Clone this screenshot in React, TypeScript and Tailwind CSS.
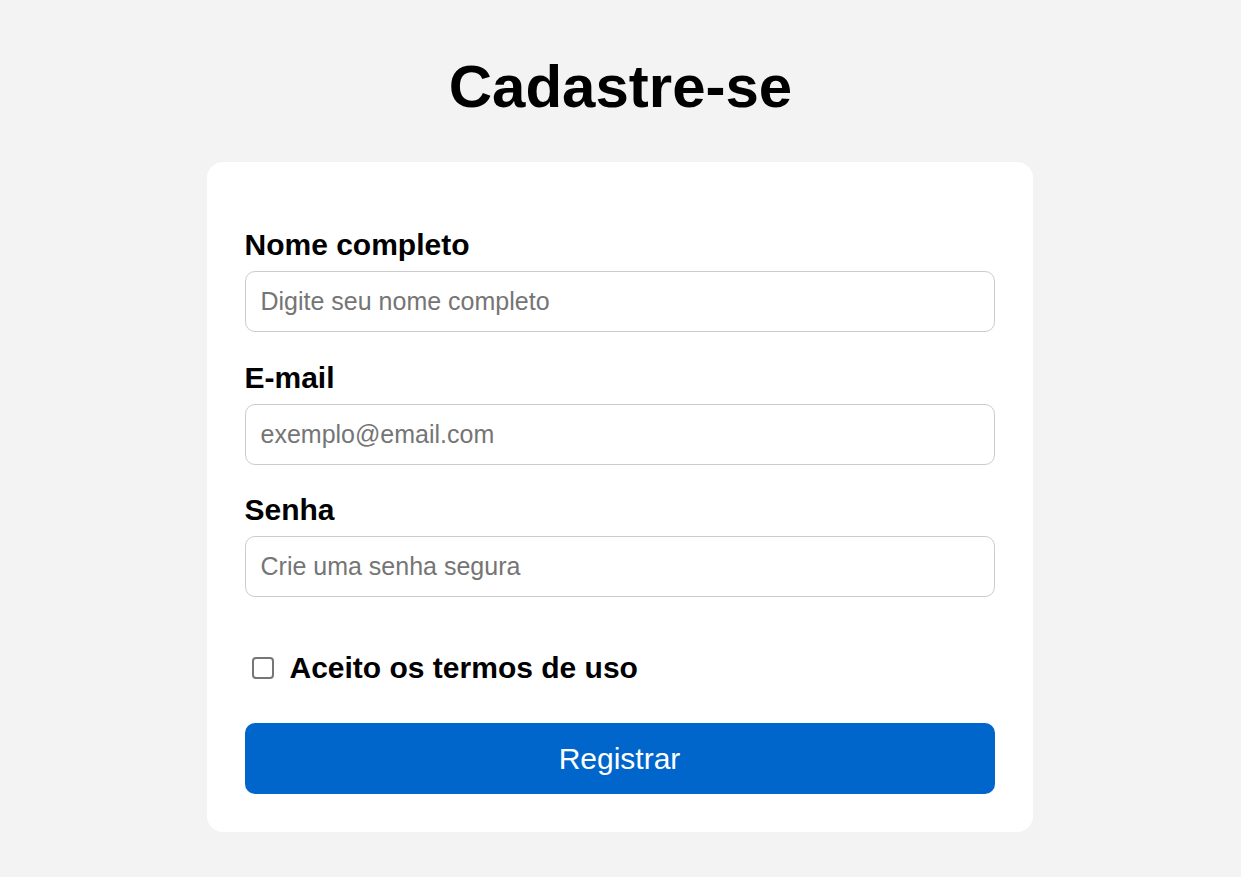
const fields = [
  { label: "Nome completo", type: "text", placeholder: "Digite seu nome completo" },
  { label: "E-mail", type: "email", placeholder: "exemplo@email.com" },
  { label: "Senha", type: "password", placeholder: "Crie uma senha segura" },
]

const App = () => {
  return (
    <div className="min-h-screen bg-[#f3f3f3] flex flex-col items-center pt-[52px] font-['Liberation_Sans',Arial,sans-serif] text-black">
      <h1 className="text-[60px] font-bold leading-[69px]">Cadastre-se</h1>

      <form className="mt-[41px] w-[826px] mr-[2px] bg-white rounded-[16px] px-[38px] pt-[66px] pb-[38px]">
        {fields.map((f, i) => (
          <div key={f.label} className={i > 0 ? "mt-[28.5px]" : ""}>
            <label className="block text-[30px] font-bold leading-[33px] mb-[10px]">
              {f.label}
            </label>
            <input
              type={f.type}
              placeholder={f.placeholder}
              className="w-full h-[61px] border border-[#cccccc] rounded-[10px] px-[15px] text-[25px] outline-none placeholder:text-[#757575]"
            />
          </div>
        ))}

        <label className="mt-[54px] flex items-center h-[34px]">
          <input
            type="checkbox"
            className="appearance-none ml-[7px] w-[22px] h-[22px] border-2 border-[#767676] rounded-[4px] bg-white"
          />
          <span className="ml-[16px] text-[30px] font-bold leading-[34px]">
            Aceito os termos de uso
          </span>
        </label>

        <button
          type="button"
          className="mt-[38px] w-full h-[71px] rounded-[10px] bg-[#0066cc] text-white text-[30px]"
        >
          Registrar
        </button>
      </form>
    </div>
  )
}

export default App
